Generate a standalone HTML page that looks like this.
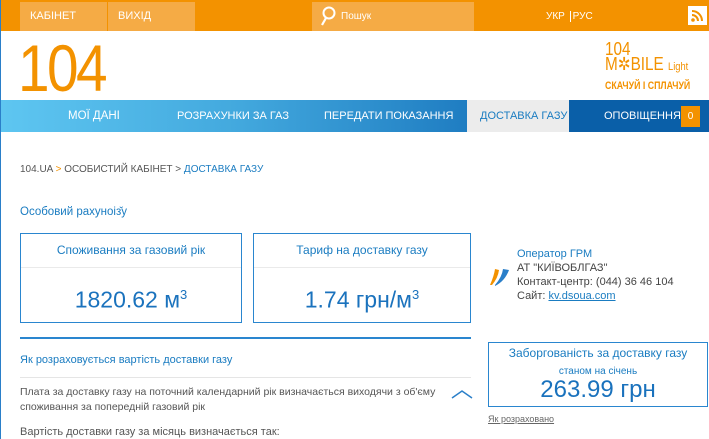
<!DOCTYPE html>
<html><head><meta charset="utf-8"><style>
*{margin:0;padding:0;box-sizing:border-box}
body{width:709px;height:439px;overflow:hidden;background:#fff;font-family:"Liberation Sans",sans-serif;position:relative;border-left:1px solid #2a7fc9}
.abs{position:absolute;white-space:nowrap}
.top{left:0;top:0;width:709px;height:31px;background:#f39200}
.tc{position:absolute;top:2px;height:29px;background:#f5ab45;color:#fff;font-size:11px;line-height:29px}
.nv{position:absolute;top:100px;height:32px;line-height:32px;color:#fff;font-size:11.5px;white-space:nowrap}
.blue{color:#1a7cc1}
.box{position:absolute;border:1px solid #2a86cf;background:#fff}
.bt{height:34px;border-bottom:1px solid #eaeaea;text-align:center;line-height:32px;color:#1a7cc1;font-size:12px}
.bv{text-align:center;color:#1a72bd;font-size:23px;line-height:54px}
sup{font-size:13px}
.g{color:#555;font-size:11px}
</style></head><body>
<div class="abs top"></div>
<div class="tc" style="left:19px;width:87px;padding-left:10px">КАБІНЕТ</div>
<div class="tc" style="left:107px;width:87px;padding-left:10px">ВИХІД</div>
<div class="tc" style="left:311px;width:162px"></div>
<svg class="abs" style="left:319px;top:6px" width="16" height="20"><circle cx="9" cy="7" r="5.5" fill="none" stroke="#fff" stroke-width="2"/><line x1="6" y1="12" x2="2" y2="19" stroke="#fff" stroke-width="2.2"/></svg>
<div class="abs" style="left:340px;top:11px;font-size:10px;color:#fff">Пошук</div>
<div class="abs" style="left:545px;top:11px;color:#fff;font-size:10px">УКР <span style="border-left:1px solid #fff;margin:0 2px"></span> РУС</div>
<div class="abs" style="left:687px;top:6px;width:19px;height:19px;background:#fff"><svg width="19" height="19"><circle cx="5" cy="14" r="1.8" fill="#f39200"/><path d="M4 9a6 6 0 0 1 6 6M4 5a10 10 0 0 1 10 10" fill="none" stroke="#f39200" stroke-width="2"/></svg></div>
<div class="abs" style="left:17px;top:33px;color:#f39200;font-size:66px;letter-spacing:-3px;line-height:70px;transform:scaleX(.86);transform-origin:0 0">104</div>
<div class="abs" style="left:604px;top:42px;color:#f39200;font-size:18px;line-height:15px;transform:scaleX(.85);transform-origin:0 0">104<br>M✲BILE <span style="font-size:11px">Light</span></div>
<div class="abs" style="left:604px;top:80px;color:#f39200;font-size:11px;font-weight:bold;transform:scaleX(.8);transform-origin:0 0">СКАЧУЙ І СПЛАЧУЙ</div>
<div class="abs" style="left:0;top:100px;width:709px;height:32px;background:#0a5fa8"></div>
<div class="abs" style="left:0;top:100px;width:466px;height:32px;background:linear-gradient(90deg,#5ec6f1,#43a9de 50%,#1f7dc2)"></div>
<div class="abs" style="left:466px;top:100px;width:102px;height:32px;background:#ececec"></div>
<div class="nv" style="left:67px">МОЇ ДАНІ</div>
<div class="nv" style="left:176px;font-size:11px">РОЗРАХУНКИ ЗА ГАЗ</div>
<div class="nv" style="left:323px;font-size:11px">ПЕРЕДАТИ ПОКАЗАННЯ</div>
<div class="nv" style="left:479px;color:#1a7cc1;font-size:11px">ДОСТАВКА ГАЗУ</div>
<div class="nv" style="left:603px;font-size:11px">ОПОВІЩЕННЯ</div>
<div class="abs" style="left:680px;top:106px;width:19px;height:21px;background:#f39200;color:#fff;font-size:10px;text-align:center;line-height:21px">0</div>
<div class="abs g" style="left:19px;top:164px;font-size:10px">104.UA <span style="color:#f39200">&gt;</span> ОСОБИСТИЙ КАБІНЕТ &gt; <span class="blue">ДОСТАВКА ГАЗУ</span></div>
<div class="abs blue" style="left:19px;top:206px;font-size:11.5px">Особовий рахуноіз̆у</div>
<div class="box" style="left:19px;top:233px;width:222px;height:90px"><div class="bt">Споживання за газовий рік</div><div class="bv">1820.62 м<sup>3</sup></div></div>
<div class="box" style="left:252px;top:233px;width:218px;height:90px"><div class="bt">Тариф на доставку газу</div><div class="bv">1.74 грн/м<sup>3</sup></div></div>
<svg class="abs" style="left:488px;top:266px" width="24" height="20"><path d="M1 19 Q5 10 6 3 L10 4 Q9 12 3 19Z" fill="#f39200"/><path d="M6 19 Q13 11 14 3 L20 4 Q16 15 6 20Z" fill="#2a7fc9"/></svg>
<div class="abs" style="left:516px;top:247px;font-size:11px;line-height:14px;color:#444"><span class="blue">Оператор ГРМ</span><br>АТ "КИЇВОБЛГАЗ"<br>Контакт-центр: (044) 36 46 104<br>Сайт: <u class="blue">kv.dsoua.com</u></div>
<div class="abs" style="left:19px;top:337px;width:451px;height:2px;background:#2a86cf"></div>
<div class="abs blue" style="left:19px;top:354px;font-size:11px">Як розраховується вартість доставки газу</div>
<div class="abs" style="left:19px;top:377px;width:451px;height:1px;background:#e5e5e5"></div>
<div class="abs g" style="left:19px;top:385px;line-height:15px;font-size:10.5px">Плата за доставку газу на поточний календарний рік визначається виходячи з об'єму<br>споживання за попередній газовий рік</div>
<svg class="abs" style="left:450px;top:389px" width="22" height="10"><path d="M1 9 L11 2 L21 9" fill="none" stroke="#2a7fc9" stroke-width="1.5"/></svg>
<div class="abs g" style="left:19px;top:426px">Вартість доставки газу за місяць визначається так:</div>
<div class="box" style="left:487px;top:342px;width:220px;height:65px;text-align:center;color:#1a7cc1"><div style="font-size:12px;margin-top:3px">Заборгованість за доставку газу</div><div style="font-size:10px;margin-top:6px">станом на січень</div><div style="font-size:24px;line-height:26px;color:#1a72bd">263.99 грн</div></div>
<div class="abs" style="left:487px;top:414px;font-size:9px;color:#666;text-decoration:underline">Як розраховано</div>
</body></html>
